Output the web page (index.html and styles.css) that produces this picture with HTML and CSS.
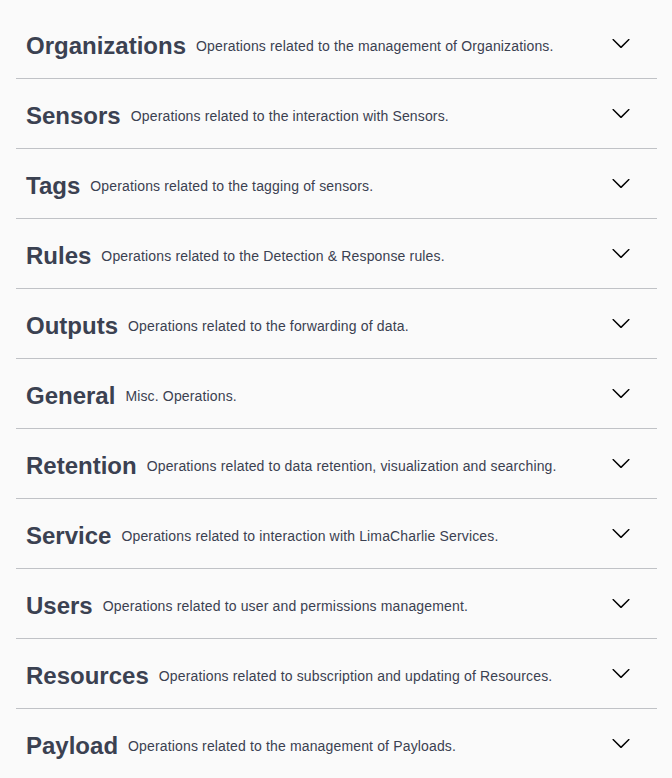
FILE: index.html
```html
<!DOCTYPE html>
<html lang="en">
<head>
<meta charset="utf-8">
<title>API Tags</title>
<link rel="stylesheet" href="styles.css">
</head>
<body>
<div class="wrapper">
  <section class="tag-section">
    <h3 class="tag"><span class="tag-name">Organizations</span><small class="tag-desc">Operations related to the management of Organizations.</small><button class="expand"><svg viewBox="0 0 20 20" width="20" height="20"><path d="M17.418 6.109c.272-.268.709-.268.979 0s.271.701 0 .969l-7.908 7.83c-.27.268-.707.268-.979 0l-7.908-7.83c-.27-.268-.27-.701 0-.969.271-.268.709-.268.979 0L10 13.25l7.418-7.141z"/></svg></button></h3>
  </section>
  <section class="tag-section">
    <h3 class="tag"><span class="tag-name">Sensors</span><small class="tag-desc">Operations related to the interaction with Sensors.</small><button class="expand"><svg viewBox="0 0 20 20" width="20" height="20"><path d="M17.418 6.109c.272-.268.709-.268.979 0s.271.701 0 .969l-7.908 7.83c-.27.268-.707.268-.979 0l-7.908-7.83c-.27-.268-.27-.701 0-.969.271-.268.709-.268.979 0L10 13.25l7.418-7.141z"/></svg></button></h3>
  </section>
  <section class="tag-section">
    <h3 class="tag"><span class="tag-name">Tags</span><small class="tag-desc">Operations related to the tagging of sensors.</small><button class="expand"><svg viewBox="0 0 20 20" width="20" height="20"><path d="M17.418 6.109c.272-.268.709-.268.979 0s.271.701 0 .969l-7.908 7.83c-.27.268-.707.268-.979 0l-7.908-7.83c-.27-.268-.27-.701 0-.969.271-.268.709-.268.979 0L10 13.25l7.418-7.141z"/></svg></button></h3>
  </section>
  <section class="tag-section">
    <h3 class="tag"><span class="tag-name">Rules</span><small class="tag-desc">Operations related to the Detection &amp; Response rules.</small><button class="expand"><svg viewBox="0 0 20 20" width="20" height="20"><path d="M17.418 6.109c.272-.268.709-.268.979 0s.271.701 0 .969l-7.908 7.83c-.27.268-.707.268-.979 0l-7.908-7.83c-.27-.268-.27-.701 0-.969.271-.268.709-.268.979 0L10 13.25l7.418-7.141z"/></svg></button></h3>
  </section>
  <section class="tag-section">
    <h3 class="tag"><span class="tag-name">Outputs</span><small class="tag-desc">Operations related to the forwarding of data.</small><button class="expand"><svg viewBox="0 0 20 20" width="20" height="20"><path d="M17.418 6.109c.272-.268.709-.268.979 0s.271.701 0 .969l-7.908 7.83c-.27.268-.707.268-.979 0l-7.908-7.83c-.27-.268-.27-.701 0-.969.271-.268.709-.268.979 0L10 13.25l7.418-7.141z"/></svg></button></h3>
  </section>
  <section class="tag-section">
    <h3 class="tag"><span class="tag-name">General</span><small class="tag-desc">Misc. Operations.</small><button class="expand"><svg viewBox="0 0 20 20" width="20" height="20"><path d="M17.418 6.109c.272-.268.709-.268.979 0s.271.701 0 .969l-7.908 7.83c-.27.268-.707.268-.979 0l-7.908-7.83c-.27-.268-.27-.701 0-.969.271-.268.709-.268.979 0L10 13.25l7.418-7.141z"/></svg></button></h3>
  </section>
  <section class="tag-section">
    <h3 class="tag"><span class="tag-name">Retention</span><small class="tag-desc">Operations related to data retention, visualization and searching.</small><button class="expand"><svg viewBox="0 0 20 20" width="20" height="20"><path d="M17.418 6.109c.272-.268.709-.268.979 0s.271.701 0 .969l-7.908 7.83c-.27.268-.707.268-.979 0l-7.908-7.83c-.27-.268-.27-.701 0-.969.271-.268.709-.268.979 0L10 13.25l7.418-7.141z"/></svg></button></h3>
  </section>
  <section class="tag-section">
    <h3 class="tag"><span class="tag-name">Service</span><small class="tag-desc">Operations related to interaction with LimaCharlie Services.</small><button class="expand"><svg viewBox="0 0 20 20" width="20" height="20"><path d="M17.418 6.109c.272-.268.709-.268.979 0s.271.701 0 .969l-7.908 7.83c-.27.268-.707.268-.979 0l-7.908-7.83c-.27-.268-.27-.701 0-.969.271-.268.709-.268.979 0L10 13.25l7.418-7.141z"/></svg></button></h3>
  </section>
  <section class="tag-section">
    <h3 class="tag"><span class="tag-name">Users</span><small class="tag-desc">Operations related to user and permissions management.</small><button class="expand"><svg viewBox="0 0 20 20" width="20" height="20"><path d="M17.418 6.109c.272-.268.709-.268.979 0s.271.701 0 .969l-7.908 7.83c-.27.268-.707.268-.979 0l-7.908-7.83c-.27-.268-.27-.701 0-.969.271-.268.709-.268.979 0L10 13.25l7.418-7.141z"/></svg></button></h3>
  </section>
  <section class="tag-section">
    <h3 class="tag"><span class="tag-name">Resources</span><small class="tag-desc">Operations related to subscription and updating of Resources.</small><button class="expand"><svg viewBox="0 0 20 20" width="20" height="20"><path d="M17.418 6.109c.272-.268.709-.268.979 0s.271.701 0 .969l-7.908 7.83c-.27.268-.707.268-.979 0l-7.908-7.83c-.27-.268-.27-.701 0-.969.271-.268.709-.268.979 0L10 13.25l7.418-7.141z"/></svg></button></h3>
  </section>
  <section class="tag-section">
    <h3 class="tag"><span class="tag-name">Payload</span><small class="tag-desc">Operations related to the management of Payloads.</small><button class="expand"><svg viewBox="0 0 20 20" width="20" height="20"><path d="M17.418 6.109c.272-.268.709-.268.979 0s.271.701 0 .969l-7.908 7.83c-.27.268-.707.268-.979 0l-7.908-7.83c-.27-.268-.27-.701 0-.969.271-.268.709-.268.979 0L10 13.25l7.418-7.141z"/></svg></button></h3>
  </section>
</div>
</body>
</html>
```

FILE: styles.css
```css
html, body {
  margin: 0;
  padding: 0;
  background: #fafafa;
}

body {
  font-family: "Liberation Sans", Arial, sans-serif;
  color: #3b4151;
}

.wrapper {
  padding: 14px 15px 0 16px;
}

.tag-section {
  display: flex;
  flex-direction: column;
}

.tag {
  display: flex;
  align-items: center;
  box-sizing: border-box;
  height: 65px;
  margin: 0 0 5px;
  padding: 0 20px 0 10px;
  border-bottom: 1px solid rgba(59, 65, 81, 0.3);
  font-size: 24px;
  font-weight: 700;
  color: #3b4151;
}

.tag-name {
  line-height: normal;
}

.tag-desc {
  flex: 1;
  padding: 0 10px;
  font-size: 14px;
  font-weight: 400;
  letter-spacing: 0.15px;
  line-height: normal;
}

.expand {
  display: flex;
  align-items: center;
  justify-content: center;
  background: none;
  border: none;
  padding: 0 6px;
  margin: 0 0 7px;
  cursor: pointer;
}

.expand svg {
  display: block;
  width: 20px;
  height: 20px;
  fill: #000;
}
```
